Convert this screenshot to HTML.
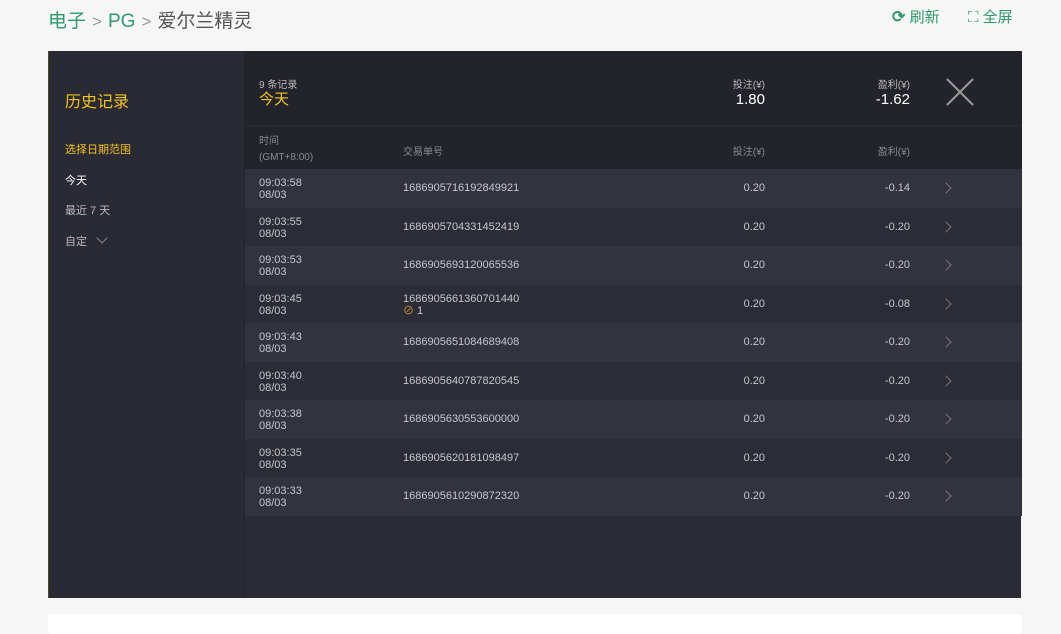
<!DOCTYPE html>
<html><head><meta charset="utf-8"><style>
*{margin:0;padding:0;box-sizing:border-box}
body{width:1061px;height:629px;background:#f6f6f6;font-family:"Liberation Sans","Noto Sans CJK SC",sans-serif;position:relative;overflow:hidden}
.a{position:absolute}
.crumb{left:48px;top:6px;font-size:19px;color:#2e9a6e;white-space:nowrap}
.crumb .s{color:#999;font-size:17px;margin:0 6px}
.crumb .g{color:#555}
.tb{top:6px;font-size:15px;color:#2e9a6e}
.panel{left:48px;top:51px;width:973px;height:547px;background:#2b2b36;border-left:1px solid #4a4a30}
.side{left:0;top:0;width:196px;height:547px;background:#2a2a35;border-right:1px solid #22222a}
.hdr{left:196px;top:0;width:777px;height:118px;background:#23232c}
.row{left:196px;width:777px;height:38.5px;font-size:11px;color:#c6c6cc}
.row span{position:absolute}
.gy{color:#8a8a95}
</style></head><body>
<div class="a crumb">电子<span class="s">&gt;</span>PG<span class="s">&gt;</span><span class="g">爱尔兰精灵</span></div>
<div class="a tb" style="left:892px"><span style="font-size:16px;font-weight:bold">⟳</span> 刷新</div>
<div class="a tb" style="left:968px"><span style="font-size:15px">⛶</span> 全屏</div>
<div class="a" style="left:48px;top:614px;width:974px;height:20px;background:#fff;border-radius:3px"></div>
<div class="a panel">
 <div class="a side">
  <div class="a" style="left:16px;top:37px;font-size:16px;color:#f2c318">历史记录</div>
  <div class="a" style="left:16px;top:90px;font-size:11px;color:#f2c318">选择日期范围</div>
  <div class="a" style="left:16px;top:121px;font-size:11px;color:#fff">今天</div>
  <div class="a" style="left:16px;top:151px;font-size:11px;color:#bbb">最近 7 天</div>
  <div class="a" style="left:16px;top:182px;font-size:11px;color:#bbb">自定 <span style="display:inline-block;width:8px;height:8px;border-right:1.5px solid #888;border-bottom:1.5px solid #888;transform:rotate(45deg);margin:0 0 3px 8px"></span></div>
 </div>
 <div class="a hdr">
  <div class="a" style="left:14px;top:25px;font-size:10px;color:#bbb">9 条记录</div>
  <div class="a" style="left:14px;top:37px;font-size:15px;color:#f2c318">今天</div>
  <div class="a" style="right:257px;top:25px;font-size:10px;color:#bbb;text-align:right">投注(¥)<br><span style="font-size:15px;color:#fff">1.80</span></div>
  <div class="a" style="right:112px;top:25px;font-size:10px;color:#bbb;text-align:right">盈利(¥)<br><span style="font-size:15px;color:#fff">-1.62</span></div>
  <svg class="a" style="left:700px;top:26px" width="30" height="30"><path d="M2 2L28 28M28 2L2 28" stroke="#999" stroke-width="2"/></svg>
  <div class="a" style="left:0;top:74px;width:777px;height:1px;background:#2c2c36"></div>
  <div class="a gy" style="left:14px;top:83px;font-size:10px;line-height:16px">时间<br>(GMT+8:00)</div>
  <div class="a gy" style="left:158px;top:92px;font-size:10px">交易单号</div>
  <div class="a gy" style="right:257px;top:92px;font-size:10px">投注(¥)</div>
  <div class="a gy" style="right:112px;top:92px;font-size:10px">盈利(¥)</div>
 </div>
 <div id="rows"></div>
</div>
<script>
var d=[["09:03:58","1686905716192849921","-0.14"],["09:03:55","1686905704331452419","-0.20"],["09:03:53","1686905693120065536","-0.20"],["09:03:45","1686905661360701440","-0.08"],["09:03:43","1686905651084689408","-0.20"],["09:03:40","1686905640787820545","-0.20"],["09:03:38","1686905630553600000","-0.20"],["09:03:35","1686905620181098497","-0.20"],["09:03:33","1686905610290872320","-0.20"]];
var h="";d.forEach(function(r,i){var t=118+i*38.5;var bg=i%2?"#2c2c37":"#33333f";
var id=i==3?'<span style="left:158px;top:8px;line-height:12px">'+r[1]+'<br><span style="position:static;color:#d4a020">⊘</span> 1</span>':'<span style="left:158px;top:13px">'+r[1]+'</span>';
h+='<div class="a row" style="top:'+t+'px;background:'+bg+'"><span style="left:14px;top:8px;line-height:12px">'+r[0]+'<br>08/03</span>'+id+'<span style="right:257px;top:13px">0.20</span><span style="right:112px;top:13px">'+r[2]+'</span><span style="left:697px;top:15px;width:8px;height:8px;border-right:1.5px solid #777;border-top:1.5px solid #777;transform:rotate(45deg)"></span></div>'});
document.getElementById("rows").innerHTML=h;
</script>
</body></html>
